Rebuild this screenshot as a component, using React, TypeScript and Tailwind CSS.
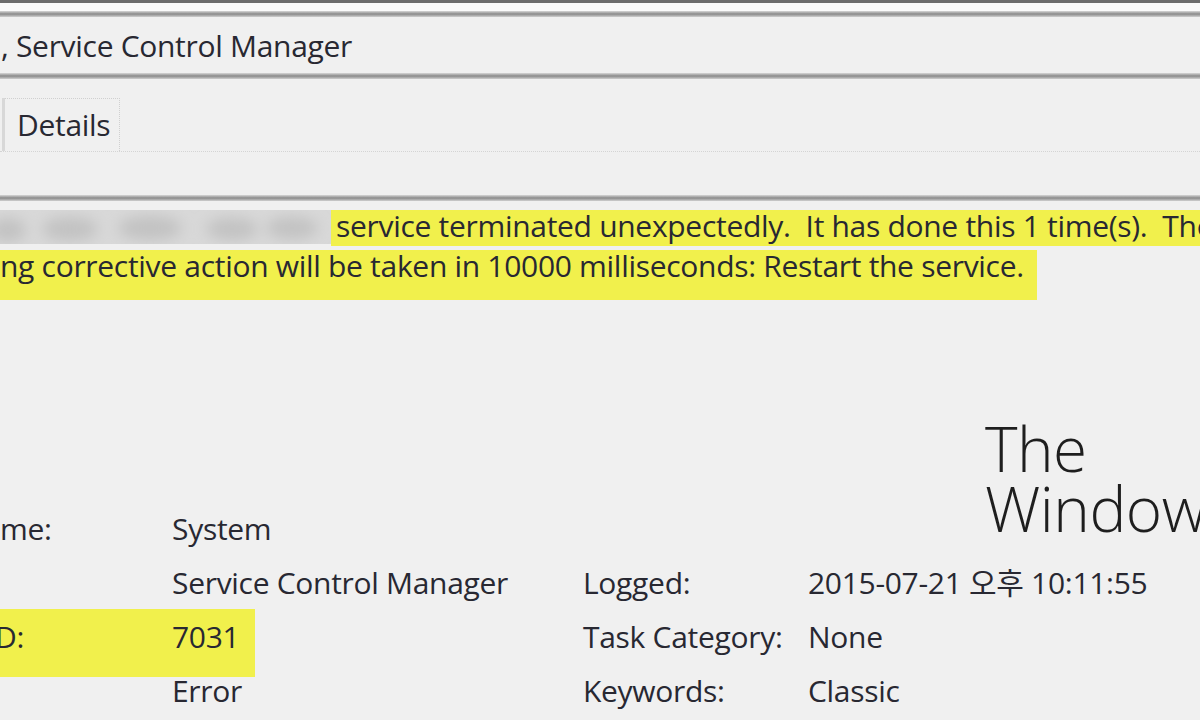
import React from "react";

const font = { fontFamily: '"Open Sans", "Noto Sans", "Noto Sans CJK KR", sans-serif' };

function Line() {
  return <div className="h-[6px] bg-gradient-to-b from-[#d8d8d8] via-[#8a8a8a] to-[#d0d0d0]" />;
}

function Redacted() {
  return (
    <div className="w-[331px] h-[34px] bg-[#d8d8d8] overflow-hidden shrink-0">
      <svg width="331" height="34" viewBox="0 0 331 34">
        <defs>
          <filter id="b" x="-50%" y="-50%" width="200%" height="200%">
            <feGaussianBlur stdDeviation="7" />
          </filter>
        </defs>
        <g filter="url(#b)" fill="#c2c2c2">
          <ellipse cx="8" cy="20" rx="18" ry="12" />
          <ellipse cx="70" cy="19" rx="28" ry="12" />
          <ellipse cx="150" cy="18" rx="32" ry="12" />
          <ellipse cx="232" cy="19" rx="26" ry="11" />
          <ellipse cx="292" cy="18" rx="26" ry="11" />
        </g>
      </svg>
    </div>
  );
}

export default function App() {
  return (
    <div
      className="w-[1200px] h-[720px] bg-[#f0f0f0] overflow-hidden relative text-[#282832] text-[30px] tracking-[-0.3px]"
      style={font}
    >
      <div className="h-[3px] bg-[#6e6e6e]" />
      <div className="h-[8px] bg-[#fbfbfb]" />
      <Line />
      <div className="h-[56px] flex items-center pl-[1px] whitespace-pre leading-none pt-[2px]">
        , Service Control Manager
      </div>
      <Line />
      <div className="h-[116px] relative">
        <div className="flex pt-[19px]">
          <div className="w-[3px] h-[53px] bg-[#d8d8d8] ml-[2px]" />
          <div className="w-[115px] h-[53px] border-t border-r border-dotted border-[#d0d0d0] flex items-center pl-[12px] leading-none">
            Details
          </div>
        </div>
        <div className="border-t border-dotted border-[#d4d4d4]" />
      </div>
      <Line />
      <div className="pt-[9px] flex flex-col gap-[4px]">
        <div className="flex h-[36px] items-start">
          <Redacted />
          <div className="bg-[#f1f04c] h-[36px] flex-1 pl-[5px] pt-[1px] whitespace-pre leading-none overflow-hidden">
            service terminated unexpectedly.  It has done this 1 time(s).  The following
          </div>
        </div>
        <div className="w-[1037px] h-[50px] bg-[#f1f04c] whitespace-pre leading-none pt-[1px]">
          ng corrective action will be taken in 10000 milliseconds: Restart the service.
        </div>
      </div>

      <div className="absolute left-[985px] top-[418px] text-[62px] leading-[60px] font-light tracking-[-0.5px] text-[#1e1e1e]">
        <div>The</div>
        <div>Windows</div>
      </div>

      <div className="mt-[202px] flex flex-col">
        <div className="h-[54px] flex items-center leading-none">
          <div className="w-[172px]">me:</div>
          <div className="w-[411px]">System</div>
        </div>
        <div className="h-[54px] flex items-center leading-none">
          <div className="w-[172px]" />
          <div className="w-[411px]">Service Control Manager</div>
          <div className="w-[225px]">Logged:</div>
          <div className="whitespace-nowrap">2015-07-21 오후 10:11:55</div>
        </div>
        <div className="h-[54px] flex items-center leading-none">
          <div className="w-[583px] flex self-start">
            <div className="w-[255px] h-[68px] -mt-[1px] -mb-[13px] bg-[#f1f04c] flex items-start pt-[13px]">
              <div className="w-[172px]">
                <span className="-ml-[5px] inline-block">D:</span>
              </div>
              <div>7031</div>
            </div>
          </div>
          <div className="w-[225px]">Task Category:</div>
          <div>None</div>
        </div>
        <div className="h-[54px] flex items-center leading-none">
          <div className="w-[172px]" />
          <div className="w-[411px]">Error</div>
          <div className="w-[225px]">Keywords:</div>
          <div>Classic</div>
        </div>
      </div>
    </div>
  );
}
